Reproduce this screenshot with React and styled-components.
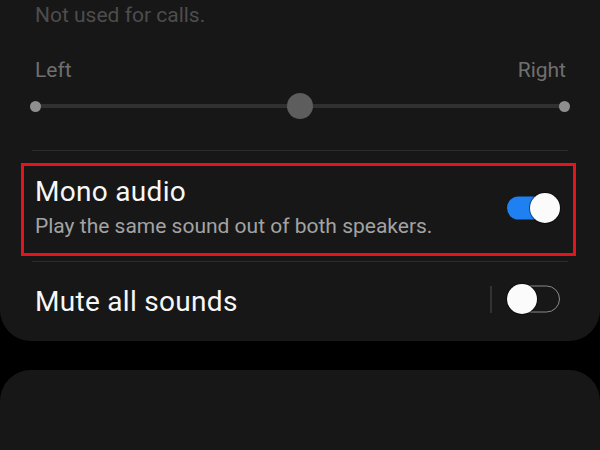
import React from "react";
import styled, { createGlobalStyle } from "styled-components";

const GlobalStyle = createGlobalStyle`
  html, body {
    margin: 0;
    padding: 0;
    background: #000;
  }
  body {
    font-family: Roboto, "Liberation Sans", sans-serif;
  }
`;

// Screen
const Screen = styled.div`
  width: 600px;
  height: 450px;
  overflow: hidden;
  background: #000;
  display: flex;
  flex-direction: column;
  gap: 29px;
`;

const Card = styled.section`
  background: #171717;
  border-radius: 0 0 31px 31px;
  padding: 1px 32px 0;
`;

const EmptyCard = styled.section`
  flex: 1;
  background: #171717;
  border-radius: 31px 31px 0 0;
`;

const Note = styled.div`
  padding-left: 3px;
  font-size: 21px;
  line-height: 28px;
  color: #4d4d4d;
`;

// Balance slider
const Labels = styled.div`
  display: flex;
  justify-content: space-between;
  margin-top: 27px;
  padding: 0 2px 0 3px;
  font-size: 21px;
  line-height: 28px;
  color: #6f6f6f;
`;

const SliderRow = styled.div`
  height: 26px;
  margin: 9px 3px 0;
  display: flex;
  align-items: center;
`;

const Track = styled.div`
  flex: 1;
  height: 4px;
  background: #303030;
  display: flex;
  align-items: center;
  justify-content: space-between;
`;

const EndDot = styled.span`
  width: 11px;
  height: 11px;
  border-radius: 50%;
  background: #8e8e8e;
  margin: 0 -5px;
`;

const Thumb = styled.span`
  width: 26px;
  height: 26px;
  border-radius: 50%;
  background: #5d5d5d;
  flex-shrink: 0;
`;

const Divider = styled.div`
  height: 1px;
  background: #2d2d2d;
  margin-top: ${({ $top }) => $top}px;
`;

// Setting rows
const Highlight = styled.div`
  box-sizing: border-box;
  height: 93px;
  margin: 12px -8px 0 -11px;
  padding: 0 13px 0 11px;
  border: 3px solid #e3141b;
  display: flex;
  align-items: center;
  justify-content: space-between;
`;

const Row = styled.div`
  height: 79px;
  padding: 0 8px 0 3px;
  display: flex;
  align-items: center;
  justify-content: space-between;
`;

const TextCol = styled.div`
  display: flex;
  flex-direction: column;
  gap: 4px;
  padding-bottom: 5px;
`;

const Title = styled.div`
  font-size: 28px;
  line-height: 34px;
  letter-spacing: 0.3px;
  color: #f7f7f7;
`;

const Sub = styled.div`
  font-size: 21px;
  line-height: 26px;
  color: #a3a3a3;
`;

const Controls = styled.div`
  display: flex;
  align-items: center;
  gap: 15px;
  margin-bottom: ${({ $lift }) => $lift || 0}px;
`;

const VLine = styled.span`
  width: 2px;
  height: 27px;
  background: #333;
`;

const Switch = styled.div`
  position: relative;
  width: 53px;
  height: 30px;
  display: flex;
  align-items: center;
  justify-content: ${({ $on }) => ($on ? "flex-end" : "flex-start")};

  &::before {
    content: "";
    position: absolute;
    left: 0;
    right: ${({ $on }) => ($on ? "3px" : "0")};
    top: 50%;
    transform: translateY(-50%);
    box-sizing: border-box;
    height: ${({ $on }) => ($on ? "23px" : "27px")};
    border-radius: 14px;
    background: ${({ $on }) => ($on ? "#1f80f2" : "transparent")};
    border: ${({ $on }) => ($on ? "none" : "1.5px solid #8a8a8a")};
  }
`;

const Knob = styled.span`
  position: relative;
  width: 30px;
  height: 30px;
  border-radius: 50%;
  background: #fbfbfb;
  box-shadow: 0 0 0 1px rgba(0, 0, 0, 0.45);
`;

export default function App() {
  return (
    <>
      <GlobalStyle />
      <Screen>
        <Card>
          <Note>Not used for calls.</Note>
          <Labels>
            <span>Left</span>
            <span>Right</span>
          </Labels>
          <SliderRow>
            <Track>
              <EndDot />
              <Thumb />
              <EndDot />
            </Track>
          </SliderRow>
          <Divider $top={31} />

          <Highlight>
            <TextCol>
              <Title>Mono audio</Title>
              <Sub>Play the same sound out of both speakers.</Sub>
            </TextCol>
            <Controls $lift={4}>
              <Switch $on>
                <Knob />
              </Switch>
            </Controls>
          </Highlight>
          <Divider $top={5} />

          <Row>
            <Title>Mute all sounds</Title>
            <Controls $lift={5}>
              <VLine />
              <Switch>
                <Knob />
              </Switch>
            </Controls>
          </Row>
        </Card>
        <EmptyCard />
      </Screen>
    </>
  );
}
